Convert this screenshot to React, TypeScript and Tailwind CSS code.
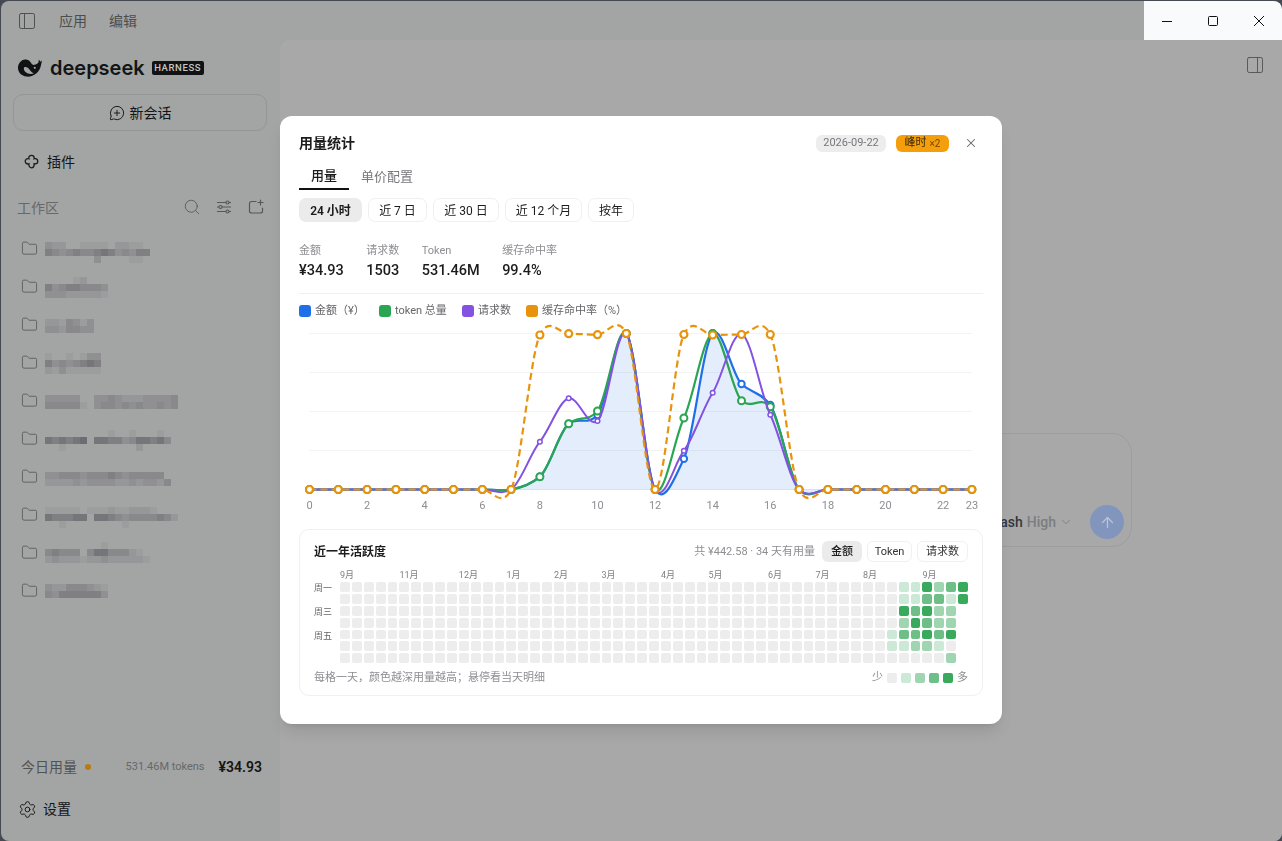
import { ArrowUp, ChevronDown, Folder, MessageCirclePlus, PanelLeft, PanelRight, Search, Settings, X } from "lucide-react";

const LEFT = 309.5;
const STEP = 28.8;
const BASE = 489.5;
const K = 0.38;

function series(mid: number[]) {
  // hours 8..16 carry data, the rest sits on the baseline
  const ys: number[] = [];
  for (let i = 0; i < 24; i++) ys.push(i >= 8 && i <= 16 ? mid[i - 8] : BASE);
  return ys;
}

const blue = series([476.7, 423.7, 415, 333.5, BASE, 458.7, 333.5, 384, 405]);
const green = series([476.7, 423.7, 411, 333.5, BASE, 418, 333.5, 400.7, 406.7]);
const purple = series([441.7, 398.3, 421, 333.5, BASE, 450.7, 392.7, 334, 414.7]);
const orange = series([335, 333.7, 334.7, 333.5, BASE, 334.5, 335, 334.5, 334.5]);

function smooth(ys: number[]) {
  const px = (i: number) => LEFT + i * STEP;
  let d = `M${px(0)} ${ys[0]}`;
  for (let i = 0; i < ys.length - 1; i++) {
    const m0 = K * (ys[Math.min(i + 1, ys.length - 1)] - ys[Math.max(i - 1, 0)]);
    const m1 = K * (ys[Math.min(i + 2, ys.length - 1)] - ys[i]);
    d += ` C${px(i) + STEP / 3} ${ys[i] + m0 / 3} ${px(i + 1) - STEP / 3} ${ys[i + 1] - m1 / 3} ${px(i + 1)} ${ys[i + 1]}`;
  }
  return d;
}

const lines = [
  { ys: blue, color: "#1f6fe8", r: 3.2, sw: 2, lw: 2.2 },
  { ys: green, color: "#2aa552", r: 3.5, sw: 2, lw: 2.2 },
  { ys: purple, color: "#8352e0", r: 2.3, sw: 1.5, lw: 2 },
  { ys: orange, color: "#e8930c", r: 3.5, sw: 2.2, lw: 2.2, dash: "7 4" },
];

const ticks = [0, 2, 4, 6, 8, 10, 12, 14, 16, 18, 20, 22, 23];

function UsageChart() {
  return (
    <svg viewBox="299 318 684 201" className="block h-[201px] w-[684px]">
      {[333.5, 372.5, 411.5, 450.5].map((y) => (
        <line key={y} x1={LEFT} x2={972} y1={y} y2={y} stroke="#f3f3f4" />
      ))}
      <line x1={LEFT} x2={972} y1={BASE} y2={BASE} stroke="#e6e8ee" />
      <path d={`${smooth(blue)} L972 ${BASE} L${LEFT} ${BASE} Z`} fill="#1f6fe8" fillOpacity={0.12} />
      {lines.map((l) => (
        <g key={l.color}>
          <path d={smooth(l.ys)} fill="none" stroke={l.color} strokeWidth={l.lw} strokeDasharray={l.dash} />
          {l.ys.map((y, i) => (
            <circle key={i} cx={LEFT + i * STEP} cy={y} r={l.r} fill="#fff" stroke={l.color} strokeWidth={l.sw} />
          ))}
        </g>
      ))}
      {ticks.map((t) => (
        <text key={t} x={LEFT + t * STEP} y={509} textAnchor="middle" fontSize={11} fill="#8e8e93">
          {t}
        </text>
      ))}
    </svg>
  );
}

const heatLevels: Record<string, number> = {
  "47-0": 1, "48-0": 1, "49-0": 4, "50-0": 2, "51-0": 3, "52-0": 4,
  "47-1": 1, "48-1": 1, "49-1": 3, "50-1": 3, "51-1": 1, "52-1": 4,
  "47-2": 4, "48-2": 3, "49-2": 4, "50-2": 2, "51-2": 2,
  "47-3": 2, "48-3": 4, "49-3": 3, "50-3": 2, "51-3": 2,
  "46-4": 1, "47-4": 3, "48-4": 3, "49-4": 4, "50-4": 3, "51-4": 4,
  "46-5": 1, "47-5": 1, "48-5": 2, "49-5": 2, "50-5": 1,
  "51-6": 2,
};

const levelColor = ["bg-[#ededed]", "bg-[#cce8d6]", "bg-[#9fd6b1]", "bg-[#6dbe87]", "bg-[#39aa5c]"];

const months = [
  { col: 1, label: "9月" }, { col: 6, label: "11月" }, { col: 11, label: "12月" }, { col: 15, label: "1月" },
  { col: 19, label: "2月" }, { col: 23, label: "3月" }, { col: 28, label: "4月" }, { col: 32, label: "5月" },
  { col: 37, label: "6月" }, { col: 41, label: "7月" }, { col: 45, label: "8月" }, { col: 50, label: "9月" },
];

function Heatmap() {
  const cells = [];
  for (let c = 0; c < 53; c++) {
    const rows = c === 52 ? 2 : 7;
    for (let r = 0; r < rows; r++) {
      cells.push(<div key={`${c}-${r}`} className={`aspect-square rounded-[2px] ${levelColor[heatLevels[`${c}-${r}`] ?? 0]}`} />);
    }
  }
  return (
    <div className="mt-[10px] h-[167px] rounded-[10px] border border-[#f0f0f0] px-[14px] pt-[11px]">
      <div className="flex h-[21px] items-center">
        <span className="pt-px text-[12px] font-semibold text-[#1c1c1e]">近一年活跃度</span>
        <span className="ml-auto pt-px text-[11px] text-[#8e8e93]">共 ¥442.58 · 34 天有用量</span>
        <div className="ml-[7px] flex gap-[5px]">
          <button className="h-[21px] w-[40px] rounded-[6px] bg-[#ebebeb] pt-px text-[11px] font-medium text-[#1c1c1e]">金额</button>
          <button className="h-[21px] w-[45px] rounded-[6px] border border-[#f0f0f0] pt-px text-[11px] text-[#333]">Token</button>
          <button className="h-[21px] w-[51px] rounded-[6px] border border-[#f0f0f0] pt-px text-[11px] text-[#333]">请求数</button>
        </div>
      </div>
      <div className="mt-[7px] ml-[26px] grid h-[11px] w-[628px] grid-cols-[repeat(53,minmax(0,1fr))] gap-[2px]">
        {months.map((m) => (
          <span key={m.col + m.label} style={{ gridColumnStart: m.col }} className="text-[9px] leading-[12px] whitespace-nowrap text-[#808085]">
            {m.label}
          </span>
        ))}
      </div>
      <div className="mt-[2px] flex">
        <div className="flex w-[26px] flex-col text-[9px] leading-[13px] text-[#66666a]">
          <span className="h-[23.800px]">周一</span>
          <span className="h-[23.800px]">周三</span>
          <span className="h-[23.800px]">周五</span>
        </div>
        <div className="grid w-[628px] grid-flow-col grid-cols-[repeat(53,minmax(0,1fr))] grid-rows-[repeat(7,1fr)] gap-[2px]">{cells}</div>
      </div>
      <div className="mt-[7px] flex h-[16px] items-center text-[11px] text-[#8e8e93]">
        <span>每格一天，颜色越深用量越高；悬停看当天明细</span>
        <span className="ml-auto">少</span>
        <div className="mx-[4px] flex gap-[4px]">
          {levelColor.map((c) => (
            <div key={c} className={`h-[10px] w-[10px] rounded-[2px] ${c}`} />
          ))}
        </div>
        <span>多</span>
      </div>
    </div>
  );
}

function UsageModal() {
  const ranges = [
    ["24 小时", "w-[63px]"],
    ["近 7 日", "w-[59px]"],
    ["近 30 日", "w-[66px]"],
    ["近 12 个月", "w-[77px]"],
    ["按年", "w-[46px]"],
  ];
  const stats = [
    ["金额", "¥34.93"],
    ["请求数", "1503"],
    ["Token", "531.46M"],
    ["缓存命中率", "99.4%"],
  ];
  const legend = [
    ["金额（¥）", "bg-[#1f6fe8]", "w-[80px]"],
    ["token 总量", "bg-[#2aa552]", "w-[83px]"],
    ["请求数", "bg-[#8352e0]", "w-[64px]"],
    ["缓存命中率（%）", "bg-[#e8930c]", "w-[110px]"],
  ];
  return (
    <div className="fixed inset-0 flex items-center justify-center pb-px">
      <div className="h-[608px] w-[722px] rounded-[12px] bg-white px-[19px] pt-[18px] text-[#1c1c1e] shadow-lg">
        <div className="flex h-[18px] items-center">
          <h2 className="text-[14px] font-semibold">用量统计</h2>
          <span className="ml-auto flex h-[17px] w-[70px] items-center justify-center rounded-[6px] bg-[#ededed] pt-px text-[11px] text-[#77777c]">2026-09-22</span>
          <span className="ml-[10px] flex h-[17px] w-[53px] items-center justify-center gap-[3px] rounded-[6px] bg-[#f59e0b] pt-px text-[11px] text-[#3b2a08]">
            峰时 <span className="text-[10px] text-[#6b4a0c]">×2</span>
          </span>
          <X className="mr-[5px] ml-[15px] h-[14px] w-[14px] text-[#66666a]" strokeWidth={1.8} />
        </div>
        <div className="mt-[12px] flex h-[26px] text-[13px]">
          <button className="border-b-2 border-[#111] px-[12px] font-medium">用量</button>
          <button className="px-[12px] text-[#77777c]">单价配置</button>
        </div>
        <div className="mt-[8px] flex gap-[6px] text-[12px]">
          {ranges.map(([r, w], i) => (
            <button
              key={r}
              className={
                i === 0
                  ? `h-[24px] rounded-[7px] bg-[#ebebeb] pt-px font-semibold ${w}`
                  : `h-[24px] rounded-[7px] border border-[#f0f0f0] pt-px ${w}`
              }
            >
              {r}
            </button>
          ))}
        </div>
        <div className="mt-[22px] flex gap-[22.500px]">
          {stats.map(([label, value]) => (
            <div key={label}>
              <div className="h-[14px] text-[11px] leading-[14px] text-[#8e8e93]">{label}</div>
              <div className="mt-[3px] h-[20px] text-[14.500px] leading-[20px] font-medium">{value}</div>
            </div>
          ))}
        </div>
        <div className="mt-[12px] h-px bg-[#f0f0f0]" />
        <div className="mt-[10px] flex h-[14px] items-center text-[11px] text-[#66666a]">
          {legend.map(([label, color, w]) => (
            <div key={label} className={`flex items-center gap-[4px] ${w}`}>
              <span className={`h-[12px] w-[12px] rounded-[3px] ${color}`} />
              <span className="whitespace-nowrap">{label}</span>
            </div>
          ))}
        </div>
        <UsageChart />
        <Heatmap />
      </div>
    </div>
  );
}

function WhaleLogo() {
  return (
    <svg viewBox="0 0 24 18" className="h-[18px] w-[24px]" fill="#111214">
      <path
        fillRule="evenodd"
        d="M7 0.500C9.500 0.300 11.500 1.200 12.800 3.500C13.600 5 15 6.200 16.500 5.800C18 5.400 19.600 4.800 20.500 3.500L20.800 0.600L22.400 2.700L24 1.400L23 6C22.500 9 21 12 18.500 14.200C15.500 16.900 12 18 8.500 17.600C3.500 17 0 13.500 0 8.800C0 4.500 3 0.900 7 0.500ZM6 8.500C8 7.500 10 8.500 11.500 10.500C12.500 12 14 13.800 16 14.500C13 15.500 9.500 15 7.500 13C6 11.500 5.500 10 6 8.500ZM16.800 7.800A1 1 0 1 0 16.801 7.800Z"
      />
    </svg>
  );
}

function PluginIcon() {
  return (
    <svg viewBox="0 0 16 16" className="h-[17px] w-[17px]" fill="none" stroke="#1a1b1c" strokeWidth={1.2}>
      <path d="M8 1.200c1.500 0 2.500 1.100 2.500 2.400 0 0.300 0 0.600-0.100 0.800 0.300-0.100 0.600-0.100 0.900-0.100 1.500 0 2.600 1.200 2.600 2.600s-1.100 2.500-2.600 2.500c-0.300 0-0.600 0-0.900-0.100 0.100 0.300 0.100 0.600 0.100 0.900 0 1.500-1 2.800-2.500 2.800s-2.500-1.300-2.500-2.800c0-0.300 0-0.600 0.100-0.900-0.300 0.100-0.600 0.100-0.900 0.100-1.500 0-2.600-1.100-2.600-2.500s1.100-2.600 2.600-2.600c0.300 0 0.600 0 0.900 0.100-0.100-0.200-0.100-0.500-0.100-0.800C5.500 2.300 6.500 1.200 8 1.200z" />
    </svg>
  );
}

function TuneIcon() {
  return (
    <svg viewBox="0 0 16 16" className="h-[16px] w-[16px]" fill="none" stroke="#565858" strokeWidth={1.2}>
      <path d="M1 3.500h9M13 3.500h2M1 8h2M6 8h9M1 12.500h9M13 12.500h2" />
      <circle cx="11.500" cy="3.500" r="1.500" />
      <circle cx="4.500" cy="8" r="1.500" />
      <circle cx="11.500" cy="12.500" r="1.500" />
    </svg>
  );
}

function NewFolderIcon() {
  return (
    <svg viewBox="0 0 16 16" className="h-[16px] w-[16px]" fill="none" stroke="#565858" strokeWidth={1.2} strokeLinecap="round">
      <path d="M8 2.500H3.500a2 2 0 0 0-2 2v7.500a2 2 0 0 0 2 2h9a2 2 0 0 0 2-2V9" />
      <path d="M12.500 1v5M10 3.500h5" />
    </svg>
  );
}

const blurShades: Record<string, string> = {
  "0": "bg-transparent",
  "1": "bg-[#9c9d9d]",
  "2": "bg-[#969798]",
  "3": "bg-[#909092]",
  "4": "bg-[#89898b]",
  "5": "bg-[#808083]",
  "6": "bg-[#76767a]",
  "7": "bg-[#6c6c72]",
};

// hand-picked from the reference, the project names are pixelated there
const workspaces: { mt: string; rows: string[] }[] = [
  { mt: "mt-[12px]", rows: ["322001111022110", "5434544565343550", "0000000300001100"] },
  { mt: "mt-[9px]", rows: ["0000120000", "534554443", "333222221"] },
  { mt: "mt-[13px]", rows: ["2214313", "3324433"] },
  { mt: "mt-[9px]", rows: ["10010133", "53434565", "21311111"] },
  { mt: "mt-[13px]", rows: ["3333300334322233334", "4444410344343433434"] },
  { mt: "mt-[10px]", rows: ["000000000100100010", "6565670665534665640", "0010000000000200"] },
  { mt: "mt-[14px]", rows: ["33444344454344444", "222232333322323324"] },
  { mt: "mt-[11px]", rows: ["1111101112112221", "6555660665434444542", "00100000000100"] },
  { mt: "mt-[8px]", rows: ["00000000100", "45444046644421", "232221223222221"] },
  { mt: "mt-[12px]", rows: ["322444321", "435555553"] },
];

function BlurredName({ rows, mt }: { rows: string[]; mt: string }) {
  return (
    <div className={`${mt} ml-[7px] blur-[0.7px]`}>
      {rows.map((row, i) => (
        <div key={i} className="flex h-[7px]">
          {row.split("").map((c, j) => (
            <div key={j} className={`h-[7px] w-[7px] ${blurShades[c]}`} />
          ))}
        </div>
      ))}
    </div>
  );
}

function Sidebar() {
  return (
    <aside className="flex w-[279px] shrink-0 flex-col text-[14px] text-[#141516]">
      <div className="flex h-[39px] items-center pl-[16px] text-[#4c4e4e]">
        <PanelLeft className="h-[20px] w-[20px]" strokeWidth={1.15} />
        <span className="ml-[22px] pt-px">应用</span>
        <span className="ml-[22px] pt-px">编辑</span>
      </div>
      <div className="mt-[18px] flex h-[20px] items-center pl-[17px]">
        <WhaleLogo />
        <span className="ml-[8px] font-['Inter',sans-serif] text-[20px] leading-none font-semibold text-[#141516]">deepseek</span>
        <span className="ml-[7px] flex h-[14px] w-[52px] items-center justify-center rounded-[2px] bg-[#111214] text-[9.500px] font-medium tracking-[0.6px] text-[#c4c6c6]">HARNESS</span>
      </div>
      <button className="mt-[16px] ml-[12px] flex h-[37px] w-[254px] items-center justify-center gap-[5px] rounded-[10px] border border-[#949595]">
        <MessageCirclePlus className="h-[16px] w-[16px]" strokeWidth={1.4} />
        <span className="pt-px">新会话</span>
      </button>
      <div className="mt-[20px] flex h-[22px] items-center gap-[7px] pl-[22px]">
        <PluginIcon />
        插件
      </div>
      <div className="mt-[23px] flex h-[22px] items-center pl-[16px] text-[#66686a]">
        <span className="pt-[2px]">工作区</span>
        <Search className="ml-auto h-[18px] w-[18px] text-[#565858]" strokeWidth={1.15} />
        <div className="ml-[15px]"><TuneIcon /></div>
        <div className="mr-[16px] ml-[16px]"><NewFolderIcon /></div>
      </div>
      <div className="mt-[12px]">
        {workspaces.map((w, i) => (
          <div key={i} className="flex h-[38px] items-start pl-[20px]">
            <Folder className="mt-[10px] h-[17px] w-[17px] text-[#565858]" strokeWidth={1.2} />
            <BlurredName rows={w.rows} mt={w.mt} />
          </div>
        ))}
      </div>
      <div className="mt-auto flex h-[20px] items-center pr-[18px] pl-[20px]">
        <span className="text-[#505254]">今日用量</span>
        <span className="ml-[8px] h-[6px] w-[6px] rounded-full bg-[#b97a10]" />
        <span className="ml-auto text-[11px] text-[#66686a]">531.46M tokens</span>
        <span className="ml-[14px] text-[14px] font-semibold">¥34.93</span>
      </div>
      <div className="mt-[22px] mb-[22px] flex h-[20px] items-center gap-[6px] pl-[17px]">
        <Settings className="h-[19px] w-[19px]" strokeWidth={1.2} />
        设置
      </div>
    </aside>
  );
}

function WindowControls() {
  return (
    <div className="ml-auto flex h-[39px] w-[138px] rounded-tr-[8px] bg-[#f9fafc] text-[#111]">
      <div className="flex w-[46px] items-center justify-center">
        <svg viewBox="0 0 10 10" className="h-[10px] w-[10px]"><path d="M0 5.500h10" stroke="currentColor" /></svg>
      </div>
      <div className="flex w-[46px] items-center justify-center">
        <svg viewBox="0 0 10 10" className="h-[10px] w-[10px]"><rect x="0.500" y="0.500" width="9" height="9" rx="1" fill="none" stroke="currentColor" /></svg>
      </div>
      <div className="flex w-[46px] items-center justify-center">
        <svg viewBox="0 0 10 10" className="h-[10px] w-[10px]"><path d="M0 0l10 10M10 0L0 10" stroke="currentColor" /></svg>
      </div>
    </div>
  );
}

function MainPane() {
  return (
    <main className="flex min-w-0 flex-1 flex-col">
      <WindowControls />
      <div className="flex flex-1 flex-col rounded-tl-[10px] bg-[#a8a8a8]">
        <div className="flex justify-end pt-[15px] pr-[17px]">
          <PanelRight className="h-[20px] w-[20px] text-[#555759]" strokeWidth={1.15} />
        </div>
        <div className="mt-[358px] ml-[149px] flex h-[114px] w-[703px] items-end rounded-[20px] border border-[#9d9d9d] px-[7px] pb-[7px]">
          <div className="ml-auto flex items-center">
            <span className="text-[14px] font-medium text-[#34373d]">V4 Flash</span>
            <span className="ml-[4px] text-[14px] font-medium text-[#7b7d80]">High</span>
            <ChevronDown className="mr-[17px] ml-[3px] h-[14px] w-[14px] text-[#7b7d80]" strokeWidth={1.5} />
            <div className="flex h-[34px] w-[34px] items-center justify-center rounded-full bg-[#8295bd]">
              <ArrowUp className="h-[17px] w-[17px] text-[#b9c3da]" strokeWidth={1.8} />
            </div>
          </div>
        </div>
      </div>
    </main>
  );
}

export default function App() {
  return (
    <div className="h-[841px] w-[1282px] overflow-hidden bg-[#454a52] pt-px pl-px font-['Roboto','Noto_Sans_CJK_SC',sans-serif]">
      <div className="flex h-[840px] w-[1281px] overflow-hidden rounded-[8px] bg-[#a3a5a4]">
        <Sidebar />
        <MainPane />
      </div>
      <UsageModal />
    </div>
  );
}
